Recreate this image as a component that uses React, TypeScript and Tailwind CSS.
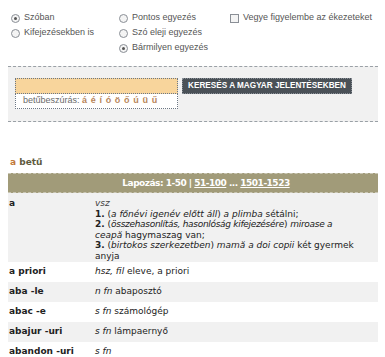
import React from "react";

const Radio = ({ checked, label }: { checked?: boolean; label: string }) => (
  <label className="flex items-center gap-[4px] h-[14px] whitespace-nowrap">
    <span className="w-[9px] h-[9px] rounded-full border border-[#8a8f96] bg-[#f4f4f4] flex items-center justify-center">
      {checked && <span className="w-[3px] h-[3px] rounded-full bg-[#555]" />}
    </span>
    <span>{label}</span>
  </label>
);

const rows = [
  { head: "a priori", body: <><i>hsz, fil</i> eleve, a priori</> },
  { head: "aba -le", body: <><i>n fn</i> abaposztó</> },
  { head: "abac -e", body: <><i>s fn</i> számológép</> },
  { head: "abajur -uri", body: <><i>s fn</i> lámpaernyő</> },
  { head: "abandon -uri", body: <><i>s fn</i></> },
];

const App = () => {
  return (
    <div className="w-[385px] h-[357px] bg-white overflow-hidden text-[#333]">
      {/* keresési opciók */}
      <div className="flex pl-[11px] pt-[11px] text-[9px] text-[#555] font-['Liberation_Sans',Arial,sans-serif]">
        <div className="w-[108px] flex flex-col gap-[1px]">
          <Radio checked label="Szóban" />
          <Radio label="Kifejezésekben is" />
        </div>
        <div className="w-[111px] flex flex-col gap-[1px]">
          <Radio label="Pontos egyezés" />
          <Radio label="Szó eleji egyezés" />
          <Radio checked label="Bármilyen egyezés" />
        </div>
        <label className="flex items-center gap-[4px] h-[14px] whitespace-nowrap">
          <span className="w-[9px] h-[9px] border border-[#8a8f96] bg-[#f4f4f4]" />
          <span>Vegye figyelembe az ékezeteket</span>
        </label>
      </div>

      <div className="ml-[8px] w-[370px] mt-[11px] border-t border-b border-dashed border-[#9aa0a6] bg-[#f1f1f1] h-[56px] pt-[11px] pl-[7px] flex gap-[4px] items-start">
        <div className="w-[163px]">
          <div className="h-[16px] bg-[#f8d59c] border border-dotted border-[#6c7784]" />
          <div className="h-[15px] bg-white border border-t-0 border-dotted border-[#6c7784] text-[9px] leading-[13px] pl-[7px] font-['Liberation_Sans',Arial,sans-serif] text-[#6b6b6b] whitespace-nowrap">
            betűbeszúrás: <span className="text-[#b8865a] font-bold tracking-[0.6px]">á é í ó ö ő ú ü ű</span>
          </div>
        </div>
        <button className="h-[16px] w-[170px] bg-[#4a5157] border border-dotted border-[#8a9098] text-white font-bold text-[8.2px] leading-[14px] font-['Liberation_Sans',Arial,sans-serif] whitespace-nowrap">
          KERESÉS A MAGYAR JELENTÉSEKBEN
        </button>
      </div>

      <div className="ml-[8px] w-[370px] mt-[34px] font-['DejaVu_Sans',Verdana,sans-serif] text-[9px]">
        <div className="pl-[2px] h-[17px] font-bold text-[9px] leading-[12px] text-[#5e5a3e]">
          <span className="text-[#c2783a]">a</span> betű
        </div>
        <div className="h-[20px] bg-[#a19b79] border-t border-b border-dashed border-[#c9c6b4] text-white font-bold text-[9px] leading-[18px] text-center pl-[26px] tracking-[-0.5px] whitespace-nowrap">
          Lapozás: 1-50 | <span className="underline">51-100</span> ... <span className="underline">1501-1523</span>
        </div>
        <div className="bg-[#f1f1f1] flex pt-[5px] pb-[1px] leading-[10.5px]">
          <div className="w-[87px] pl-[1px] font-bold text-[#222]">a</div>
          <div className="flex-1 text-[#222] whitespace-nowrap">
            <i className="text-[#444]">vsz</i>
            <br />
            <b>1.</b> (<i>a főnévi igenév előtt áll</i>) <i>a plimba</i> sétálni;
            <br />
            <b>2.</b> (<i className="tracking-[-0.3px]">összehasonlítás, hasonlóság kifejezésére</i>) <i className="tracking-[-0.3px]">miroase a</i>
            <br />
            <i>ceapă</i> hagymaszag van;
            <br />
            <b>3.</b> (<i>birtokos szerkezetben</i>) <i>mamă a doi copii</i> két gyermek
            <br />
            anyja
          </div>
        </div>
        {rows.map((r, i) => (
          <div key={r.head} className={`flex h-[20px] items-center ${i % 2 === 1 ? "bg-[#f1f1f1]" : "bg-white"}`}>
            <div className="w-[87px] pl-[1px] font-bold text-[#222]">{r.head}</div>
            <div className="flex-1 text-[#222]">{r.body}</div>
          </div>
        ))}
      </div>
    </div>
  );
};

export default App;
